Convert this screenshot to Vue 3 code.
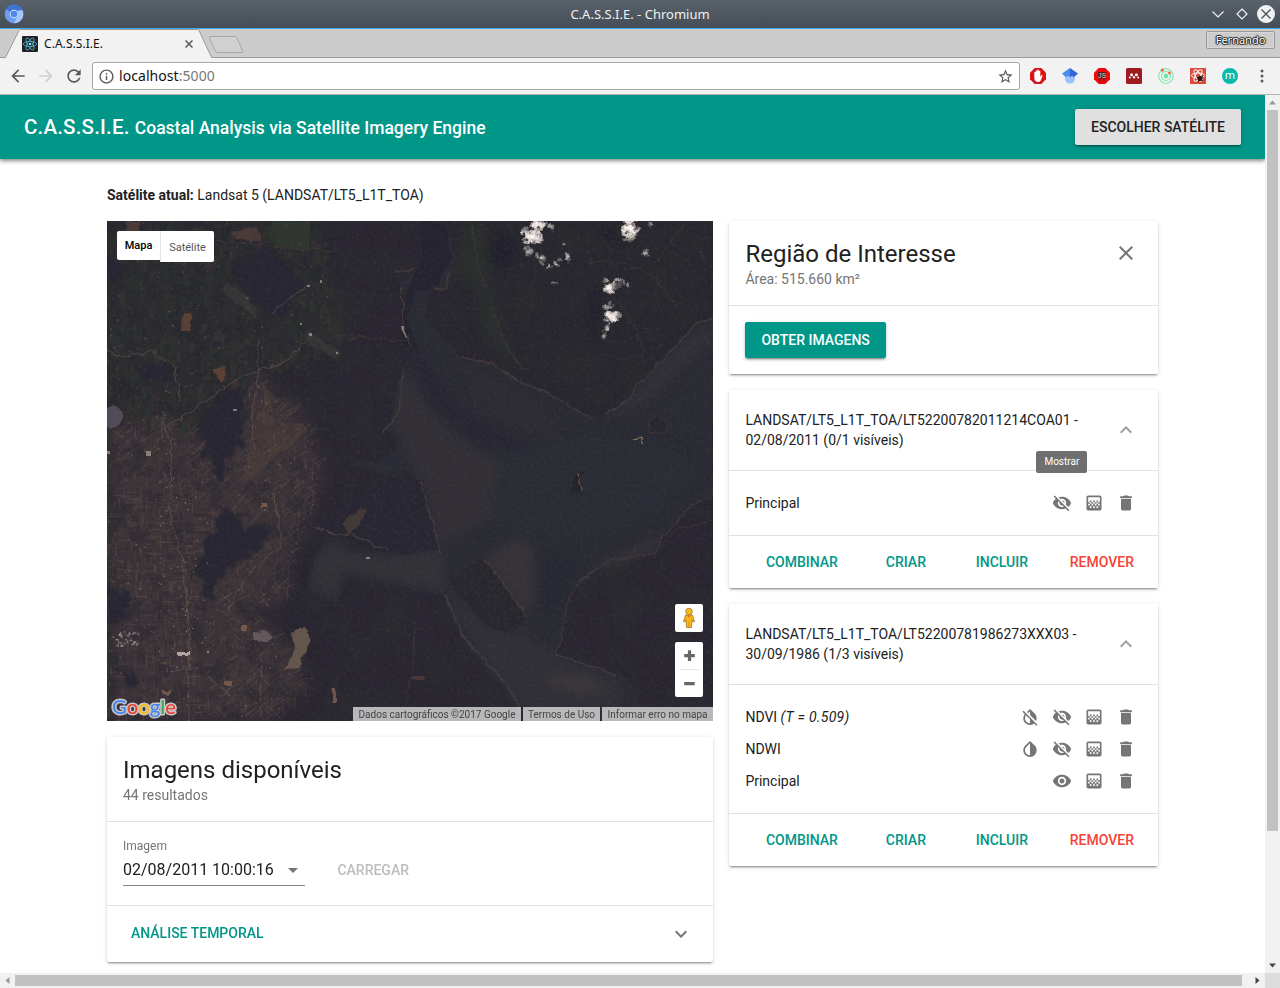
<script setup>
const icons = {
  close: 'M19 6.41L17.59 5 12 10.59 6.41 5 5 6.41 10.59 12 5 17.59 6.41 19 12 13.41 17.59 19 19 17.59 13.41 12z',
  less: 'M12 8l-6 6 1.41 1.41L12 10.83l4.59 4.58L18 14z',
  more: 'M16.59 8.59L12 13.17 7.41 8.59 6 10l6 6 6-6z',
  trash: 'M6 19c0 1.1.9 2 2 2h8c1.1 0 2-.9 2-2V7H6v12zM19 4h-3.5l-1-1h-5l-1 1H5v2h14V4z',
  show: 'M12 4.5C7 4.5 2.73 7.61 1 12c1.73 4.39 6 7.5 11 7.5s9.27-3.11 11-7.5c-1.73-4.39-6-7.5-11-7.5zM12 17c-2.76 0-5-2.24-5-5s2.24-5 5-5 5 2.24 5 5-2.24 5-5 5zm0-8c-1.66 0-3 1.34-3 3s1.34 3 3 3 3-1.34 3-3-1.34-3-3-3z',
  hide: 'M12 7c2.76 0 5 2.24 5 5 0 .65-.13 1.26-.36 1.83l2.92 2.92c1.51-1.26 2.7-2.89 3.43-4.75-1.73-4.39-6-7.5-11-7.5-1.4 0-2.74.25-3.98.7l2.16 2.16C10.74 7.13 11.35 7 12 7zM2 4.27l2.28 2.28.46.46C3.08 8.3 1.78 10.02 1 12c1.73 4.39 6 7.5 11 7.5 1.55 0 3.03-.3 4.38-.84l.42.42L19.73 22 21 20.73 3.27 3 2 4.27zM7.53 9.8l1.55 1.55c-.05.21-.08.43-.08.65 0 1.66 1.34 3 3 3 .22 0 .44-.03.65-.08l1.55 1.55c-.67.33-1.41.53-2.2.53-2.76 0-5-2.24-5-5 0-.79.2-1.53.53-2.2zm4.31-.78l3.15 3.15.02-.16c0-1.66-1.34-3-3-3l-.17.01z',
  gradient: 'M11 9h2v2h-2zm-2 2h2v2H9zm4 0h2v2h-2zm2-2h2v2h-2zM7 9h2v2H7zm12-6H5c-1.1 0-2 .9-2 2v14c0 1.1.9 2 2 2h14c1.1 0 2-.9 2-2V5c0-1.1-.9-2-2-2zM9 18H7v-2h2v2zm4 0h-2v-2h2v2zm4 0h-2v-2h2v2zm2-7h-2v2h2v2h-2v-2h-2v2h-2v-2h-2v2H9v-2H7v2H5v-2h2v-2H5V5h14v6z',
  invert: 'M17.66 7.93L12 2.27 6.34 7.93c-3.12 3.12-3.12 8.19 0 11.31C7.9 20.8 9.95 21.58 12 21.58c2.05 0 4.1-.78 5.66-2.34 3.12-3.12 3.12-8.19 0-11.31zM12 19.59c-1.6 0-3.11-.62-4.24-1.76C6.62 16.69 6 15.19 6 13.59s.62-3.11 1.76-4.24L12 5.1v14.49z',
  invertOff: 'M20.65 20.87l-2.35-2.35-6.3-6.29-3.56-3.57-1.42-1.41L4.27 4.5 3 5.77l2.78 2.78c-2.55 3.14-2.36 7.76.56 10.69C7.9 20.8 9.95 21.58 12 21.58c1.79 0 3.57-.59 5.03-1.78l2.7 2.7L21 21.23l-.35-.36zM12 19.59c-1.6 0-3.11-.62-4.24-1.76C6.62 16.69 6 15.19 6 13.59c0-1.32.43-2.57 1.21-3.6L12 14.77v4.82zM12 5.1v4.58l7.25 7.26c1.37-2.96.84-6.57-1.6-9.01L12 2.27l-3.7 3.7 1.41 1.41L12 5.1z',
  back: 'M20 11H7.83l5.59-5.59L12 4l-8 8 8 8 1.41-1.41L7.83 13H20v-2z',
  forward: 'M12 4l-1.41 1.41L16.17 11H4v2h12.17l-5.58 5.59L12 20l8-8z',
  reload: 'M17.65 6.35C16.2 4.9 14.21 4 12 4c-4.42 0-7.99 3.58-7.99 8s3.57 8 7.99 8c3.73 0 6.84-2.55 7.73-6h-2.08c-.82 2.33-3.04 4-5.65 4-3.31 0-6-2.69-6-6s2.69-6 6-6c1.66 0 3.14.69 4.22 1.78L13 11h7V4l-2.35 2.35z',
  star: 'M22 9.24l-7.19-.62L12 2 9.19 8.63 2 9.24l5.46 4.73L5.82 21 12 17.27 18.18 21l-1.63-7.03L22 9.24zM12 15.4l-3.76 2.27 1-4.28-3.32-2.88 4.38-.38L12 6.1l1.71 4.04 4.38.38-3.32 2.88 1 4.28L12 15.4z',
  info: 'M11 17h2v-6h-2v6zm1-15C6.48 2 2 6.48 2 12s4.48 10 10 10 10-4.48 10-10S17.52 2 12 2zm0 18c-4.41 0-8-3.59-8-8s3.59-8 8-8 8 3.59 8 8-3.59 8-8 8zM11 9h2V7h-2v2z',
}

const groups = [
  {
    id: 'LANDSAT/LT5_L1T_TOA/LT52200782011214COA01 -',
    date: '02/08/2011 (0/1 visíveis)',
    tooltip: 'Mostrar',
    layers: [{ name: 'Principal', tools: ['hide', 'gradient', 'trash'] }],
  },
  {
    id: 'LANDSAT/LT5_L1T_TOA/LT52200781986273XXX03 -',
    date: '30/09/1986 (1/3 visíveis)',
    layers: [
      { name: 'NDVI', note: '(T = 0.509)', tools: ['invertOff', 'hide', 'gradient', 'trash'] },
      { name: 'NDWI', tools: ['invert', 'hide', 'gradient', 'trash'] },
      { name: 'Principal', tools: ['show', 'gradient', 'trash'] },
    ],
  },
]

// Seeded generator keeps the terrain identical on every load.
let seed = 20110802
const rnd = () => {
  seed = (seed + 0x6d2b79f5) | 0
  let t = Math.imul(seed ^ (seed >>> 15), 1 | seed)
  t = (t + Math.imul(t ^ (t >>> 7), 61 | t)) ^ t
  return ((t ^ (t >>> 14)) >>> 0) / 4294967296
}
const pick = (a) => a[Math.floor(rnd() * a.length)]
const f = (n) => n.toFixed(1)

const inside = (x, y, p) => {
  let r = false
  for (let i = 0, j = p.length - 1; i < p.length; j = i++) {
    const [a, b] = p[i]
    const [c, d] = p[j]
    if (b > y !== d > y && x < ((c - a) * (y - b)) / (d - b) + a) r = !r
  }
  return r
}
const rural = [[0, 0], [215, 0], [225, 60], [245, 110], [225, 135], [190, 140], [140, 160], [95, 200], [60, 210], [0, 200]]
const urban = [[0, 205], [60, 195], [105, 225], [130, 185], [150, 150], [200, 195], [215, 255], [205, 290], [185, 330], [182, 372], [150, 392], [205, 455], [165, 500], [0, 500]]
const forests = [
  [[128, 38], [160, 28], [185, 50], [195, 70], [165, 95], [145, 80], [125, 55]],
  [[93, 205], [130, 158], [138, 190], [130, 230], [112, 258], [98, 235]],
  [[114, 292], [163, 312], [150, 332], [120, 346], [105, 376], [89, 355], [95, 325]],
  [[0, 360], [16, 368], [20, 398], [0, 406]],
  [[15, 450], [36, 455], [30, 466], [15, 464]],
  [[42, 142], [62, 144], [66, 155], [45, 163], [28, 155]],
  [[0, 42], [22, 44], [13, 60], [0, 62]],
]
const blocked = (x, y) => forests.some((p) => inside(x, y, p))

const fields = []
for (let i = 0; i < 800; i++) {
  const x = rnd() * 245
  const y = rnd() * 205
  if (!inside(x, y, rural) || blocked(x, y)) continue
  fields.push({
    x: f(x), y: f(y), w: f(2 + rnd() * 5), h: f(4 + rnd() * 11),
    t: `rotate(${f(-8 + rnd() * 30)} ${f(x)} ${f(y)})`,
    c: pick(['#2d3631', '#31352e', '#36322f', '#28282f', '#3b3332', '#2c3730', '#413634', '#272934', '#28282f', '#2e322f']),
    o: f(0.3 + rnd() * 0.4),
  })
}

const streets = []
for (let i = 0; i < 3000; i++) {
  const x = rnd() * 215
  const y = 150 + rnd() * 350
  if (!inside(x, y, urban) || blocked(x, y)) continue
  const base = x < 95 && y > 270 ? pick([0, 90]) : pick([-42, -42, 48, -25, 90])
  const a = (base * Math.PI) / 180
  const l = 4 + rnd() * 10
  streets.push({
    d: `M${f(x)} ${f(y)}l${f(Math.cos(a) * l)} ${f(Math.sin(a) * l)}`,
    c: pick(['#54463f', '#4c3e3c', '#5a4a42', '#2a2832', '#2b2932', '#574a49', '#604d42', '#4d4345']),
    w: f(0.6 + rnd() * 0.9), o: f(0.3 + rnd() * 0.35),
  })
}

const specks = []
for (let i = 0; i < 1900; i++) {
  const x = rnd() * 225
  const y = rnd() * 500
  const u = inside(x, y, urban)
  if ((!u && !inside(x, y, rural)) || blocked(x, y)) continue
  if (!u && rnd() < 0.6) continue
  specks.push({
    x: f(x), y: f(y), w: f(0.6 + rnd() * 1.6), h: f(0.6 + rnd() * 1.5),
    c: pick(['#6d5b50', '#735f52', '#574b49', '#695c5a', '#4f4340', '#82695a', '#2a2831']),
    o: f(0.25 + rnd() * 0.45),
  })
}
for (let i = 0; i < 60; i++) {
  specks.push({ x: f(50 + rnd() * 50), y: f(260 + rnd() * 190), w: 1.2, h: 1.2, c: '#a59a97', o: f(0.3 + rnd() * 0.5) })
}
for (let i = 0; i < 30; i++) {
  specks.push({ x: f(5 + rnd() * 26), y: f(410 + rnd() * 14), w: f(1 + rnd() * 2), h: f(1 + rnd() * 2), c: '#a8a09c', o: f(0.3 + rnd() * 0.5) })
}

const paths = []
for (let i = 0; i < 170; i++) {
  const x = 400 + rnd() * 200
  const y = rnd() * 135
  if (x - 400 < y * 1.1) continue
  paths.push({ d: `M${f(x)} ${f(y)}l${f(2 + rnd() * 5)} ${f(2 + rnd() * 6)}`, c: pick(['#493d32', '#3b372d', '#563f34', '#34382f']) })
}

const clouds = []
const cloudSpots = [[423, 14, 9, 9, 120], [430, 3, 7, 4, 50], [419, 30, 5, 4, 12], [432, 35, 5, 5, 14], [440, 43, 4, 3, 7], [449, 42, 3, 3, 5], [457, 36, 5, 5, 12], [456, 22, 2, 3, 4], [522, 6, 7, 9, 90], [521, 17, 5, 3, 14], [501, 66, 6, 6, 70], [497, 58, 3, 3, 6], [510, 60, 4, 4, 10], [499, 83, 4, 4, 10], [503, 95, 6, 6, 70], [498, 107, 5, 5, 12], [537, 32, 4, 3, 7], [446, 60, 3, 1.5, 4], [443, 5, 3, 4, 6], [542, 2, 3, 3, 5], [519, 63, 2, 2, 3], [495, 116, 2, 3, 3]]
cloudSpots.forEach(([cx, cy, rx, ry, n]) => {
  for (let i = 0; i < n; i++) {
    const a = rnd() * 6.283
    const k = rnd() * 1.15
    clouds.push({ x: f(cx + 2 + Math.cos(a) * rx * k), y: f(cy + 1 + Math.sin(a) * ry * k), r: f(0.7 + rnd() * 1.6), o: f((n > 30 ? 0.35 : 0.15) + rnd() * 0.2) })
  }
})
</script>

<template>
  <div class="window">
    <header class="titlebar">
      <svg class="app-logo" viewBox="0 0 20 20">
        <circle cx="10" cy="10" r="9.3" fill="#6d9df0" />
        <path d="M10 10 1.9 5.3A9.3 9.3 0 0 1 18.6 6.4H10z" fill="#3f74d6" />
        <path d="M10 19.3 14 11 14 6.4h4.6A9.3 9.3 0 0 1 10 19.3z" fill="#a5c5fb" />
        <circle cx="10" cy="10" r="4.3" fill="#c9dcfb" />
        <circle cx="10" cy="10" r="3.3" fill="#4f86e8" />
      </svg>
      <span class="window-title">C.A.S.S.I.E. - Chromium</span>
      <svg class="window-buttons" viewBox="0 0 70 20">
        <g fill="none" stroke="#eef0f1" stroke-width="1.2">
          <path d="M2.500 7.500 8 13 13.500 7.500" />
          <path d="M32 5 37 10 32 15 27 10z" />
        </g>
        <circle cx="56" cy="10" r="9" fill="#eff0f1" />
        <path d="M51.500 5.500l9 9m0-9l-9 9" stroke="#475057" stroke-width="1.300" />
      </svg>
    </header>

    <div class="tabs">
      <svg class="tab-shapes" viewBox="0 0 260 29">
        <path d="M5 29 19 1.500Q19.500 .5 21 .5H197.500Q198.500 .5 199 1.500L212 29z" fill="#f2f2f2" />
        <path d="M0 28.500H5.500L19 1.500Q19.500 .5 21 .5H197.500Q198.500 .5 199 1.500L211.500 28.500H260" fill="none" stroke="#999" />
        <path d="M210.500 7.500H235Q236 7.500 236.600 8.500L243 22.500Q243 23.500 242 23.500H217.500Q216 23.500 215.500 22.500L209.500 9Q209 7.500 210.500 7.500z" fill="#d0d0d0" stroke="#a6a6a6" />
      </svg>
      <div class="tab">
        <svg class="favicon" viewBox="0 0 16 16">
          <rect width="16" height="16" rx="1" fill="#222" />
          <g fill="none" stroke="#53b5cf" stroke-width=".8">
            <ellipse cx="8" cy="8" rx="6.700" ry="2.600" />
            <ellipse cx="8" cy="8" rx="6.700" ry="2.600" transform="rotate(60 8 8)" />
            <ellipse cx="8" cy="8" rx="6.700" ry="2.600" transform="rotate(120 8 8)" />
          </g>
          <circle cx="8" cy="8" r="1.300" fill="#7de0f5" />
        </svg>
        <span class="tab-title">C.A.S.S.I.E.</span>
        <svg class="tab-close" viewBox="0 0 8 8"><path d="M.5.5l7 7m0-7l-7 7" stroke="#5a5a5a" stroke-width="1.500" /></svg>
      </div>
      <span class="profile">Fernando</span>
    </div>

    <nav class="toolbar">
      <svg class="nav-icon" viewBox="0 0 24 24"><path :d="icons.back" /></svg>
      <svg class="nav-icon off" viewBox="0 0 24 24"><path :d="icons.forward" /></svg>
      <svg class="nav-icon" viewBox="0 0 24 24"><path :d="icons.reload" /></svg>
      <div class="address">
        <svg class="info" viewBox="0 0 24 24"><path :d="icons.info" /></svg>
        <span>localhost<i>:5000</i></span>
        <svg class="star" viewBox="0 0 24 24"><path :d="icons.star" /></svg>
      </div>
      <div class="extensions">
        <svg viewBox="0 0 16 16">
          <path d="M4.700 0h6.600L16 4.700v6.600L11.300 16H4.700L0 11.300V4.700z" fill="#d9151b" />
          <path d="M4.300 9V4.200q.7-1 1.400 0V3q.8-1.200 1.500 0v-.9q.9-1 1.600 0V3.200q.8-1 1.500 0V9l1-1.800q1.300-.5 1.200.6L10.800 12.500Q10 14 8 14 4.500 13.700 4.300 10z" fill="#fff" />
        </svg>
        <svg viewBox="0 0 16 16">
          <circle cx="8" cy="10.800" r="5" fill="#9fc1fb" />
          <path d="M0 5.500 8 0V9L5.500 7.800 4 9.500z" fill="#4f8af0" /><path d="M8 0l8 5.500-4.500 4L10.500 7.800 8 9z" fill="#3367d6" />
        </svg>
        <svg viewBox="0 0 16 16">
          <path d="M4.700 0h6.600L16 4.700v6.600L11.300 16H4.700L0 11.300V4.700z" fill="#f20808" />
          <path d="M4 4h8v6.500H4z" fill="#5a1d1d" />
          <text x="8" y="9.700" text-anchor="middle" class="ext-js">JS</text>
          <path d="M5 11h2v2.500H5zM9 11h2v2.500H9z" fill="#7a1c1c" />
        </svg>
        <svg viewBox="0 0 16 16">
          <rect width="16" height="16" rx="1.500" fill="#9d1a20" />
          <g fill="#fff"><circle cx="5.600" cy="6.800" r="1.500" /><circle cx="10.400" cy="6.800" r="1.500" /><circle cx="3.800" cy="9.500" r="1" /><circle cx="8" cy="9.200" r="1.200" /><circle cx="12.200" cy="9.500" r="1" /></g>
        </svg>
        <svg viewBox="0 0 16 16">
          <g fill="none" stroke="#83edb0" stroke-width="1.200"><circle cx="8" cy="8" r="7.300" /><circle cx="8" cy="8" r="4.500" /></g>
          <circle cx="8" cy="8" r="2.400" fill="#70e5a4" /><circle cx="4.300" cy="2" r="1.600" fill="#fa5a36" /><circle cx="11.500" cy="5" r="1.400" fill="#fa5a36" />
        </svg>
        <svg viewBox="0 0 16 16">
          <rect width="16" height="16" fill="#dc4b39" />
          <g fill="none" stroke="#fff" stroke-width="1"><ellipse cx="8" cy="7.500" rx="6.500" ry="2.500" /><ellipse cx="8" cy="7.500" rx="6.500" ry="2.500" transform="rotate(60 8 7.500)" /><ellipse cx="8" cy="7.500" rx="6.500" ry="2.500" transform="rotate(120 8 7.500)" /></g>
          <ellipse cx="10" cy="10.500" rx="2.400" ry="2.800" transform="rotate(35 10 10.500)" fill="#241b1b" /><path d="M6.500 9l6.500 4M8 13.500l5-6" stroke="#241b1b" />
        </svg>
        <svg viewBox="0 0 16 16">
          <circle cx="8" cy="8" r="8" fill="#09b9ae" />
          <text x="8" y="11" text-anchor="middle" class="ext-m">m</text>
        </svg>
      </div>
      <svg class="menu-dots" viewBox="0 0 4 14"><circle cx="2" cy="2" r="1.500" /><circle cx="2" cy="7" r="1.500" /><circle cx="2" cy="12" r="1.500" /></svg>
    </nav>

    <div class="viewport">
      <main class="page">
        <div class="appbar">
          <h1>C.A.S.S.I.E. <small>Coastal Analysis via Satellite Imagery Engine</small></h1>
          <button class="btn raised grey">ESCOLHER SATÉLITE</button>
        </div>
        <div class="content">
          <p class="current"><b>Satélite atual:</b> Landsat 5 (LANDSAT/LT5_L1T_TOA)</p>
          <div class="columns">
            <section class="left">
              <div class="map">
                <svg class="terrain" viewBox="0 0 606 500">
                  <defs>
                    <filter id="soft" x="-20%" y="-20%" width="140%" height="140%" color-interpolation-filters="sRGB"><feGaussianBlur stdDeviation="5" /></filter>
                    <filter id="haze" x="-20%" y="-20%" width="140%" height="140%" color-interpolation-filters="sRGB"><feGaussianBlur stdDeviation="9" /></filter>
                    <filter id="edge" color-interpolation-filters="sRGB"><feTurbulence type="fractalNoise" baseFrequency=".09" numOctaves="3" seed="4" result="n" /><feDisplacementMap in="SourceGraphic" in2="n" scale="7" xChannelSelector="R" yChannelSelector="G" /><feGaussianBlur stdDeviation=".6" /></filter>
                    <filter id="rough" color-interpolation-filters="sRGB"><feTurbulence type="fractalNoise" baseFrequency=".06" numOctaves="4" seed="9" result="n" /><feDisplacementMap in="SourceGraphic" in2="n" scale="26" xChannelSelector="R" yChannelSelector="G" /><feGaussianBlur stdDeviation="1.200" /></filter>
                    <filter id="grain" x="0" y="0" width="100%" height="100%" color-interpolation-filters="sRGB">
                      <feTurbulence type="fractalNoise" baseFrequency=".3" numOctaves="3" seed="8" />
                      <feColorMatrix values="0 0 0 0 .36  0 0 0 0 .33  0 0 0 0 .33  1.6 0 0 0 -.72" />
                    </filter>
                    <filter id="patch" x="0" y="0" width="100%" height="100%" color-interpolation-filters="sRGB">
                      <feTurbulence type="fractalNoise" baseFrequency=".05" numOctaves="4" seed="15" />
                      <feColorMatrix values="0 0 0 0 .15  0 0 0 0 .15  0 0 0 0 .19  0 6 0 0 -3.1" />
                    </filter>
                    <filter id="green" x="0" y="0" width="100%" height="100%" color-interpolation-filters="sRGB">
                      <feTurbulence type="fractalNoise" baseFrequency=".03" numOctaves="4" seed="31" />
                      <feColorMatrix values="0 0 0 0 .18  0 0 0 0 .19  0 0 0 0 .18  0 3 0 0 -1.400" />
                    </filter>
                  </defs>
                  <rect width="606" height="500" fill="#292631" />
                  <path d="M340 0H606V100L500 195 400 150 330 100z" fill="#28272f" filter="url(#soft)" />
                  <path d="M355 0 378 0 383 60 398 110 408 145 395 135 375 110 370 70 352 55z" fill="#2a2e2e" filter="url(#soft)" />
                  <rect width="606" height="500" filter="url(#green)" opacity=".4" />
                  <polygon :points="rural.join(' ')" fill="#2b2c2f" filter="url(#soft)" />
                  <polygon :points="urban.join(' ')" fill="#3b3338" filter="url(#haze)" />
                  <g filter="url(#edge)">
                    <rect v-for="(r, i) in fields" :key="i" :x="r.x" :y="r.y" :width="r.w" :height="r.h" :transform="r.t" :fill="r.c" :opacity="r.o" />
                  </g>
                  <g fill="none">
                    <path v-for="(s, i) in streets" :key="i" :d="s.d" :stroke="s.c" :stroke-width="s.w" :opacity="s.o" />
                  </g>
                  <rect width="215" height="500" filter="url(#patch)" opacity=".4" />
                  <g fill="#272632" filter="url(#rough)">
                    <polygon v-for="(p, i) in forests" :key="i" :points="p.join(' ')" />
                  </g>
                  <g filter="url(#edge)">
                    <path d="M125 12 150 5 155 20 130 20zM18 0h15v13H20z" fill="#59423d" opacity=".65" />
                    <path d="M165 0h38v28l-35-4z" fill="#2f352f" />
                    <path d="M75 92h8v18h-9zM105 150l13-4-3 14z" fill="#6b4838" opacity=".75" />
                    <path d="M153 160 173 180 150 195 140 230 138 262 200 210 196 202 168 205z" fill="#54433c" opacity=".4" />
                    <path d="M200 110 235 132 228 138 197 118zM120 60 150 88 148 95 115 70z" fill="#454040" opacity=".45" />
                  </g>
                  <g>
                    <rect v-for="(s, i) in specks" :key="i" :x="s.x" :y="s.y" :width="s.w" :height="s.h" :fill="s.c" :opacity="s.o" />
                  </g>

                  <!-- bay, estuary and river -->
                  <g filter="url(#edge)">
                    <path d="M310 0 340 0 348 38 344 62 322 72 319 95 335 118 356 136 385 142 410 160 440 172 465 188 482 196 502 192 522 178 530 164 550 145 574 118 587 104 606 98V275L580 283 570 300 558 312 548 330 520 340 495 346 475 364 457 378 454 405 456 420 450 434 475 446 512 453 530 468 540 500H415L405 480 385 455 362 428 346 400 337 373 300 367 285 345 262 350 232 352 232 384 200 370 208 338 222 320 245 332 270 340 300 333 331 330 330 300 316 260 300 248 280 254 240 242 275 240 300 217 276 210 285 195 293 150 307 132 299 112 299 80 290 60 311 58 315 35z" fill="#2a2b34" />
                    <path d="M312 0H338L344 38 330 66 306 74 300 100 312 132 295 120 298 76 314 40z" fill="#252330" />
                  </g>
                  <g filter="url(#soft)">
                    <path d="M297 148 312 175 345 215 390 240 430 250 400 290 330 325 316 262 296 225 286 205z" fill="#353137" opacity=".8" />
                    <path d="M350 142 392 160 430 180 455 215 410 210 375 190z" fill="#2e2c34" opacity=".8" />
                    <path d="M400 230 470 215 560 225 600 250 540 300 470 320 410 310 380 290z" fill="#2a2d35" />
                    <path d="M606 103 575 122 530 170 500 198 540 180 580 140 606 118z" fill="#353238" opacity=".8" />
                    <path d="M297 125 322 180 370 222 430 232 400 212 350 190 315 135z" fill="#272632" />
                    <path d="M378 337 408 318 425 325 428 370 418 395z" fill="#3c363a" opacity=".7" />
                    <path d="M340 374 362 390 382 406 412 410 450 435 510 458 515 490H420L370 430z" fill="#313037" />
                    <path d="M208 338 225 321 250 334 300 333 335 330 338 370 300 363 264 357 235 352 230 378 205 365z" fill="#323238" />
                    <path d="M480 355 500 340 560 314 540 332 500 346z" fill="#383439" />
                    <path d="M440 455 480 455 500 468 472 472 440 462z" fill="#463d41" opacity=".5" />
                    <path d="M436 338 470 340 456 376 440 400 434 370z" fill="#272832" />
                  </g>
                  <g filter="url(#edge)">
                    <path d="M339 358 377 338 420 395 405 413 382 407z" fill="#29272e" />
                    <path d="M302 256 315 259 331 328 300 334 270 330 240 318 215 312 235 285 280 258z" fill="#282631" />
                    <path d="M232 370 242 370 250 382H232z" fill="#272630" />
                    <path d="M468 252 475 250 475 275 464 272z" fill="#25242b" />
                  </g>
                  <g fill="none" stroke="#4c403f" filter="url(#edge)" opacity=".7">
                    <path d="M326 70 338 66 344 50M355 135 386 143 410 160 440 171 466 187 482 196M498 194 522 179 532 162 550 145 574 118 587 104 606 97" stroke-width="1.500" />
                    <path d="M378 338 420 395M313 260 333 332M338 373 355 413 379 442 403 466 413 488M450 434 510 454" stroke-width="1.700" />
                    <path d="M606 275 582 284 570 301 557 313 546 333 501 341 476 357 460 380 454 420 449 434" stroke-width="1.200" />
                    <path d="M290 50 308 48M294 65 297 110 304 125M275 212 292 193 296 150" stroke-width="1.600" />
                  </g>
                  <g fill="none" stroke="#4c4239" stroke-width=".8" opacity=".7" filter="url(#edge)">
                    <path d="M365 3 368 25 371 48 380 65M383 85 392 105 403 132 415 148M107 20 150 24 230 30M235 118 250 115 300 120" />
                    <path d="M480 40 520 43 545 54 570 85M550 40 580 0M585 15 600 42" />
                    <path d="M535 105 555 125M513 85 530 108 540 145" />
                    <path d="M309 400 306 440 300 480M557 322 568 310 590 303 606 300" />
                  </g>
                  <g fill="none" stroke="#75635b" stroke-width=".9" opacity=".6" filter="url(#edge)">
                    <path d="M60 205 85 190 130 158 150 150 180 140 200 118" /><path d="M151 115 151 150 145 195 147 230" />
                    <path d="M0 130 15 137 45 130 67 145 73 180M55 190 65 225 62 290 75 340 82 400 83 440M79 350 82 500M165 265 173 300 173 325 140 355 120 390" />
                    <path d="M205 305 228 313 243 313 280 330M155 430 153 495M165 92 205 60M100 455 125 475" />
                  </g>
                  <path v-for="(p, i) in paths" :key="i" :d="p.d" :stroke="p.c" stroke-width=".7" opacity=".5" />
                  <g filter="url(#edge)">
                    <path d="M234 303 254 286 260 292 241 315z" fill="#423836" />
                    <path d="M184 411 199 407 204 419 194 438 193 448 178 449 187 426z" fill="#65564c" />
                    <path d="M146 412 160 409 165 415 160 420 146 419z" fill="#65575a" />
                    <path d="M71 431h11v3H71z" fill="#b4aaa7" />
                    <path d="M118 460h9v5h-9zM226 468h4v14h-4zM133 405h6v4h-6zM55 470h8v4h-8zM153 281h5v6h-5z" fill="#84604f" opacity=".8" />
                    <path d="M0 188 12 187 16 200 5 208 0 205z" fill="#514b59" /><path d="M306 455h14l-3 3h-13z" fill="#4b363a" />
                    <path d="M526 219l8-2 3 6" fill="none" stroke="#876c5a" stroke-width="1.500" />
                    <path d="M542 201l8-7 11 11-4 6-15 2z" fill="#27262e" stroke="#41373a" stroke-width=".8" />
                    <path d="M472 252 474 272" stroke="#665751" stroke-width="1.200" />
                  </g>
                  <g fill="#b9aaa0"><path d="M294 105h3v4l3 8h-1l-4-8zM202 112h3v3h-3zM229 131h2v2h-2zM193 102h2v2h-2zM213 59h2v3h-2zM200 64h3v2h-3zM100 430h2v2h-2zM259 336h4v2h-4zM0 230h3v3H0zM39 230h5v5h-5zM126 188h4v2h-4z" opacity=".65" /></g>
                  <path d="M392 12 408 18 406 38 396 50 382 35zM490 10 512 7 510 20 495 20zM484 65 492 70 492 118 486 108z" fill="#1f1e2b" opacity=".7" filter="url(#soft)" />
                  <g fill="#fff5ef" filter="url(#edge)"><circle v-for="(c, i) in clouds" :key="i" :cx="c.x" :cy="c.y" :r="c.r" :opacity="c.o" /></g>
                  <rect width="606" height="500" filter="url(#grain)" opacity=".3" />
                </svg>
                <div class="map-type"><b>Mapa</b><span>Satélite</span></div>
                <svg class="google" viewBox="0 0 70 32">
                  <text x="2" y="24.500" textLength="64" lengthAdjust="spacingAndGlyphs"><tspan fill="#4285f4">G</tspan><tspan fill="#ea4335">o</tspan><tspan fill="#fbbc05">o</tspan><tspan fill="#4285f4">g</tspan><tspan fill="#34a853">l</tspan><tspan fill="#ea4335">e</tspan></text>
                </svg>
                <div class="pegman">
                  <svg viewBox="0 0 14 22">
                    <g fill="#fbb917" stroke="#9b7a35" stroke-width=".8"><path d="M3.500 8h7l2 6.500-1.500.5-1-2.500-.5 8H4.500l-.5-8L3 15l-1.500-.5z" /><circle cx="7" cy="4.500" r="3.300" /></g>
                    <path d="M4.500 8.300h5L7 11z" fill="#e8791f" /><path d="M7 14.500V20" stroke="#c98513" stroke-width=".8" />
                  </svg>
                </div>
                <div class="zoom">
                  <svg viewBox="0 0 28 55"><path d="M12.900 8.300h3.200v3.700h3.700v3.200h-3.700V19h-3.200v-3.800H9.200v-3.200h3.700zM9.200 40h10.500v3.200H9.200z" fill="#666" /><path d="M5 27.500H24" stroke="#e6e6e6" /></svg>
                </div>
                <div class="attribution"><span class="data">Dados cartográficos ©2017 Google</span><span class="terms">Termos de Uso</span><span class="report">Informar erro no mapa</span></div>
              </div>

              <article class="card">
                <div class="card-head"><div><h2>Imagens disponíveis</h2><p>44 resultados</p></div></div>
                <div class="picker">
                  <div class="field">
                    <label>Imagem</label>
                    <div class="select"><span>02/08/2011 10:00:16</span><svg viewBox="0 0 10 5"><path d="M0 0h10L5 5z" /></svg></div>
                  </div>
                  <button class="btn disabled">CARREGAR</button>
                </div>
                <div class="analysis"><button class="btn">ANÁLISE TEMPORAL</button><svg viewBox="0 0 24 24"><path :d="icons.more" /></svg></div>
              </article>
            </section>

            <section class="right">
              <article class="card">
                <div class="card-head">
                  <div><h2>Região de Interesse</h2><p>Área: 515.660 km²</p></div>
                  <svg viewBox="0 0 24 24"><path :d="icons.close" /></svg>
                </div>
                <div class="obtain"><button class="btn raised">OBTER IMAGENS</button></div>
              </article>

              <article v-for="g in groups" :key="g.id" class="card">
                <div class="group-head">
                  <span>{{ g.id }}<br />{{ g.date }}</span>
                  <svg viewBox="0 0 24 24"><path :d="icons.less" /></svg>
                </div>
                <ul class="layers">
                  <li v-for="l in g.layers" :key="l.name">
                    <span>{{ l.name }} <em v-if="l.note">{{ l.note }}</em></span>
                    <svg v-for="t in l.tools" :key="t" viewBox="0 0 24 24"><path :d="icons[t]" /></svg>
                  </li>
                </ul>
                <div class="actions">
                  <button class="btn">COMBINAR</button><button class="btn">CRIAR</button><button class="btn">INCLUIR</button><button class="btn danger">REMOVER</button>
                </div>
                <div v-if="g.tooltip" class="tooltip">{{ g.tooltip }}</div>
              </article>
            </section>
          </div>
        </div>
      </main>
      <div class="scroll-v">
        <svg viewBox="0 0 15 15"><path d="M4 9.500h7L7.500 5.500z" fill="#999" /></svg>
        <i></i>
        <svg viewBox="0 0 15 15"><path d="M4 5.500h7L7.500 9.500z" fill="#444" /></svg>
      </div>
      <div class="scroll-h">
        <svg viewBox="0 0 15 15"><path d="M9.500 4v7L5.500 7.500z" fill="#999" /></svg>
        <i></i>
        <svg viewBox="0 0 15 15"><path d="M5.500 4v7l4-3.500z" fill="#444" /></svg>
      </div>
      <div class="corner"></div>
    </div>
  </div>
</template>

<style>
body { overflow: hidden; }
</style>

<style scoped>
* { box-sizing: border-box; }
.window { width: 1280px; height: 988px; display: flex; flex-direction: column; overflow: hidden; background: #fff; font-family: Roboto, sans-serif; color: #212121; }
svg { display: block; flex: none; }
h1, h2, p, ul { margin: 0; padding: 0; font-weight: 400; }

.titlebar { height: 29px; flex: none; display: grid; grid-template-columns: 120px 1fr 120px; align-items: center; background: linear-gradient(#59626a, #454e56); border-bottom: 1px solid #3daee9; font: 13px "Noto Sans", sans-serif; color: #eff0f1; }
.app-logo { width: 20px; height: 20px; margin-left: 4px; }
.window-title { text-align: center; }
.window-buttons { width: 70px; height: 20px; justify-self: end; }
.tabs { height: 29px; flex: none; display: flex; position: relative; background: #ccc; border-bottom: 1px solid #999; }
.tab-shapes { position: absolute; left: 0; top: 0; width: 260px; height: 29px; }
.tab { position: relative; width: 195px; height: 29px; display: flex; align-items: center; padding-left: 22px; font: 12px "Noto Sans", sans-serif; color: #111; }
.favicon { width: 16px; height: 16px; }
.tab-title { flex: 1; margin-left: 6px; letter-spacing: .05px; }
.tab-close { width: 8px; height: 8px; margin-right: 2px; }
.profile { margin: 2px 5px 0 auto; width: 69px; height: 18px; border: 1px solid #999; border-radius: 2px; box-shadow: inset 0 0 0 1px #d8d8d8; font: 11px/16px "Noto Sans", sans-serif; text-align: center; color: #fff; text-shadow: 0 0 1px #222, 0 0 1px #222, 1px 0 1px #222, -1px 0 1px #222, 0 1px 1px #222, 0 -1px 1px #222; }
.toolbar { height: 37px; flex: none; display: flex; align-items: center; padding-left: 8px; background: #f2f2f2; border-bottom: 1px solid #b3b3b3; }
.nav-icon { width: 20px; height: 20px; margin-right: 8px; fill: #5a5a5a; }
.nav-icon.off { fill: #d0d0d0; }
.address { width: 928px; height: 28px; display: flex; align-items: center; padding: 0 5px; background: #fff; border: 1px solid #a6a6a6; border-radius: 3px; font: 14px "Noto Sans", sans-serif; color: #111; }
.address span { margin-top: -2px; letter-spacing: .06px; }
.address i { font-style: normal; color: #777; }
.address .info { width: 17px; height: 17px; margin-right: 4px; fill: #5a5a5a; }
.address .star { width: 17px; height: 17px; margin-left: auto; fill: #5a5a5a; }
.extensions { display: flex; gap: 16px; margin-left: 10px; }
.extensions svg { width: 16px; height: 16px; }
.ext-js { font: 700 6.500px "Liberation Sans", sans-serif; fill: #aaa; }
.ext-m { font: 11px "Noto Sans", sans-serif; fill: #fff; }
.menu-dots { width: 4px; height: 14px; margin-left: 22px; fill: #5a5a5a; }

.viewport { height: 893px; display: grid; grid-template: 878px 15px / 1265px 15px; }
.page { overflow: hidden; display: flex; flex-direction: column; }
.appbar { height: 64px; flex: none; display: flex; align-items: center; justify-content: space-between; padding: 0 24px; background: #009688; color: #fff; box-shadow: 0 2px 4px rgba(0, 0, 0, .35), 0 1px 5px rgba(0, 0, 0, .2); }
h1 { font-size: 20.500px; font-weight: 500; letter-spacing: .18px; line-height: 28px; }
h1 small { font-size: 17.500px; letter-spacing: 0; }
.btn { height: 36px; padding: 0 8px; border: 0; border-radius: 2px; background: none; font: 500 14px Roboto, sans-serif; color: #009688; white-space: nowrap; }
.btn.raised { padding: 0 16px; background: #009688; color: #fff; box-shadow: 0 2px 2px rgba(0, 0, 0, .18), 0 3px 1px -2px rgba(0, 0, 0, .2), 0 1px 5px rgba(0, 0, 0, .14); }
.btn.grey { background: #e0e0e0; color: #212121; }
.btn.danger { color: #f44336; }
.btn.disabled { color: #bdbdbd; }
.content { width: 1052px; margin: 26px 0 0 107px; }
.current { font-size: 14px; line-height: 20px; }
.current b { font-weight: 700; }
.columns { display: flex; gap: 16.400px; margin-top: 16px; }
.left { width: 606px; }
.right { width: 429px; }
.left, .right { display: flex; flex-direction: column; gap: 16px; }
.card { position: relative; background: #fff; border-radius: 2px; box-shadow: 0 2px 2px rgba(0, 0, 0, .14), 0 3px 1px -2px rgba(0, 0, 0, .2), 0 1px 5px rgba(0, 0, 0, .12); }
.card-head { height: 84px; display: flex; justify-content: space-between; padding: 16px 16px 0; }
.card-head svg { width: 24px; height: 24px; margin: 4px 4px 0 0; fill: #757575; }
h2 { font-size: 24px; line-height: 32px; margin-top: 1px; }
.card-head p { font-size: 14px; line-height: 18px; color: #757575; }
.obtain { height: 69px; padding: 16px; border-top: 1px solid #e0e0e0; }

.map { position: relative; height: 500px; overflow: hidden; }
.terrain { width: 606px; height: 500px; }
.map-type { position: absolute; left: 10px; top: 10px; display: flex; align-items: flex-start; font-size: 11px; color: #565656; }
.map-type b { width: 43px; height: 29px; line-height: 29px; text-align: center; background: #fff; color: #000; font-weight: 500; border-radius: 2px 0 0 2px; }
.map-type span { width: 54px; height: 31px; line-height: 33px; text-align: center; background: #fff; border-left: 1px solid #e2e2e2; border-radius: 0 2px 2px 0; }
.google { position: absolute; left: 3px; top: 468px; width: 70px; height: 32px; }
.google text { font: 500 20px Lato, sans-serif; stroke: #c9c5c6; stroke-width: 3px; stroke-linejoin: round; paint-order: stroke; }
.pegman { position: absolute; right: 10px; top: 383px; width: 28px; height: 28px; display: grid; place-items: center; background: #fff; border-radius: 2px; }
.pegman svg { width: 14px; height: 22px; margin-top: -1px; }
.zoom { position: absolute; right: 10px; top: 421px; width: 28px; height: 55px; background: #fff; border-radius: 2px; }
.attribution { position: absolute; right: 0; bottom: 0; display: flex; gap: 2px; font-size: 10px; line-height: 15px; color: #444; text-align: center; white-space: nowrap; }
.attribution span { background: rgba(245, 245, 245, .7); height: 14px; }
.attribution .data { width: 168px; }
.attribution .terms { width: 77px; }
.attribution .report { width: 111px; }

.picker { height: 84px; display: flex; padding: 16px; border-top: 1px solid #e0e0e0; }
.field { width: 182px; height: 48px; border-bottom: 1px solid #858585; }
.field label { display: block; font-size: 12px; line-height: 16px; color: #757575; }
.select { display: flex; justify-content: space-between; align-items: center; margin-top: 4px; padding-right: 7px; font-size: 16px; line-height: 24px; }
.select svg { width: 10px; height: 5px; fill: #757575; margin-top: 1px; }
.picker .btn { margin: 14px 0 0 24.400px; }
.analysis { height: 57px; display: flex; justify-content: space-between; align-items: center; padding: 0 20px 0 16px; border-top: 1px solid #e0e0e0; }
.analysis .btn { margin-top: -2px; }
.analysis svg { width: 24px; height: 24px; fill: #757575; }

.group-head { height: 80px; display: flex; justify-content: space-between; align-items: center; padding: 0 20px 0 16px; font-size: 14px; line-height: 20px; }
.group-head svg { width: 24px; height: 24px; fill: #9e9e9e; }
.layers { list-style: none; padding: 16px; border-top: 1px solid #e0e0e0; }
.layers li { height: 32px; display: flex; align-items: center; gap: 12px; padding-right: 6px; font-size: 14px; }
.layers li span { flex: 1; }
.layers em { letter-spacing: .3px; }
.layers svg { width: 20px; height: 20px; fill: #757575; }
.actions { height: 53px; display: grid; grid-template-columns: 104px 104px 88px 112px; padding: 8px 0 8px 20.500px; border-top: 1px solid #e0e0e0; }
.tooltip { position: absolute; left: 307px; top: 61px; width: 51px; height: 22px; border-radius: 2px; background: #6f6f6f; color: #fff; font-size: 10px; line-height: 22px; text-align: center; }

.scroll-v, .scroll-h { display: flex; background: #f1f1f1; }
.scroll-v { flex-direction: column; }
.scroll-v svg, .scroll-h svg { width: 15px; height: 15px; }
.scroll-v i { width: 11px; height: 721px; margin: 0 2px 127px; background: #c1c1c1; }
.scroll-h i { height: 11px; width: 1227px; margin: 2px 8px 2px 0; background: #c1c1c1; }
.corner { background: #dcdcdc; }
</style>
